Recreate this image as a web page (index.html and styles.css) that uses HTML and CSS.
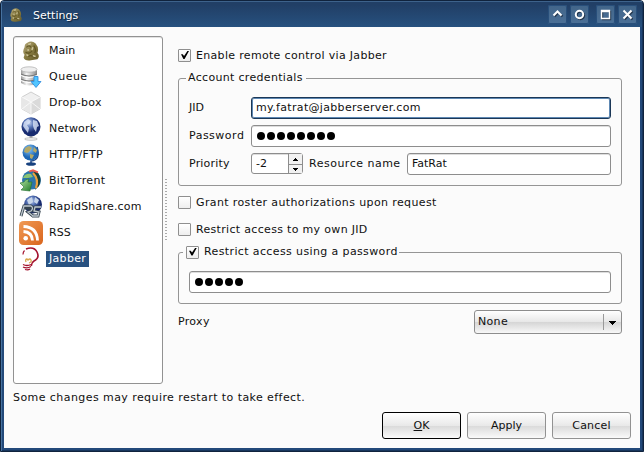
FILE: index.html
```html
<!DOCTYPE html>
<html lang="en">
<head>
<meta charset="utf-8">
<title>Settings</title>
<link rel="stylesheet" href="styles.css">
</head>
<body>
<svg class="defs" width="0" height="0">
  <defs>
    <linearGradient id="gold" x2="1" y2="1"><stop offset="0" stop-color="#b9ad80"/><stop offset=".5" stop-color="#85793f"/><stop offset="1" stop-color="#665b2a"/></linearGradient>
    <linearGradient id="steel"><stop offset="0" stop-color="#9c9c9c"/><stop offset=".35" stop-color="#f4f4f4"/><stop offset="1" stop-color="#888"/></linearGradient>
    <radialGradient id="blue" cx=".4" cy=".3"><stop offset="0" stop-color="#c4d3f2"/><stop offset=".5" stop-color="#5572b4"/><stop offset="1" stop-color="#182b70"/></radialGradient>
    <radialGradient id="sea" cx=".4" cy=".3"><stop offset="0" stop-color="#8fc8f5"/><stop offset="1" stop-color="#1c66b4"/></radialGradient>
    <linearGradient id="orange" x2="1" y2="1"><stop offset="0" stop-color="#f09a55"/><stop offset="1" stop-color="#d9651d"/></linearGradient>
    <linearGradient id="green" x2="1" y2="1"><stop offset="0" stop-color="#b4e4a0"/><stop offset="1" stop-color="#1f7a28"/></linearGradient>
    <symbol id="rat" viewBox="0 0 24 24">
      <path d="M8 3Q13 0 17 4Q21 9 19 14Q22 18 19 21L12 22Q5 23 4 19L5 16Q2 13 5 8Q5 4 8 3Z" fill="url(#gold)"/>
      <path d="M7 8q3-3 5 0M6 13q4 3 7-1M15 6q3 5 1 8M9 18q3-2 5 0l3 1" stroke="#574c1d" stroke-width="1.300" fill="none" opacity=".8"/>
      <path d="M9 5l3-1M7 16l2 1M14 17l3 1M13 11l1-3M8 11h2" stroke="#d1c8a0" stroke-width="1.600"/>
    </symbol>
  </defs>
</svg>
<div class="window">
  <header class="titlebar">
    <svg class="app-icon" width="16" height="16"><use href="#rat"/></svg>
    <h1 class="title">Settings</h1>
    <div class="wm"><svg width="19" height="19"><path class="sh" d="M6.500 11.500l4-4 4 4"/><path d="M5.500 10.500l4-4 4 4"/></svg></div>
    <div class="wm"><svg width="19" height="19"><circle class="sh" cx="10.500" cy="10.500" r="3.700"/><circle cx="9.500" cy="9.500" r="3.700"/></svg></div>
    <div class="wm gap"><svg width="19" height="19"><path class="sh thin" d="M6.500 6.500h8v8h-8z"/><path class="thin" d="M5.500 5.500h8v8h-8zM5 6.500h9"/></svg></div>
    <div class="wm"><svg width="19" height="19"><path class="sh" d="M6.500 6.500l8 8m0-8l-8 8"/><path d="M5.500 5.500l8 8m0-8l-8 8"/></svg></div>
  </header>
  <main class="content">
    <div class="panes">
      <ul class="pages">
        <li><svg viewBox="-1 -1 26 26"><use href="#rat" width="24" height="24"/></svg><span>Main</span></li>
        <li><svg viewBox="0 0 24 24"><path d="M2 5v13q8 5 16 0V5z" fill="url(#steel)"/><ellipse cx="10" cy="4.500" rx="8" ry="2.700" fill="#eee" stroke="#aaa" stroke-width=".7"/><path d="M2 9q8 4 16 0M2 14q8 4 16 0" stroke="#777" fill="none"/><path d="M2 10.500q8 4 16 0M2 15.500q8 4 16 0" stroke="#fff" fill="none"/><path d="M15 11.500h4v5h3l-5 6-5-6h3z" fill="#51c5ff" stroke="#2787dc" stroke-width=".8"/></svg><span class="s5">Queue</span></li>
        <li><svg viewBox="0 0 24 24"><path d="M12 1l9 5v12l-9 5-9-5V6z" fill="#f0f0f0" stroke="#c4c4c4" stroke-width=".8"/><path d="M3 6l9 5v12l-9-5z" fill="#e7e7e7"/><path d="M12 11l9-5v12l-9 5z" fill="#dadada"/><path d="M3 6l9 5 9-5M12 11v12M3 18l9-7 9 7" stroke="#fcfcfc" stroke-width=".8" fill="none"/></svg><span class="s3">Drop-box</span></li>
        <li><svg viewBox="0 0 24 24"><ellipse cx="12" cy="22" rx="6.500" ry="1.300" fill="#eee" stroke="#aaa" stroke-width=".6"/><path d="M12 18v3" stroke="#aaa" stroke-width="3"/><circle cx="12" cy="9.700" r="9.500" fill="url(#blue)"/><path d="M5 5l4-3 3 2-2 3-2 1 2 3-1 5-3-4-2-3zM14 3l4 1 2 5-2 1-1 5-2-3-1-3z" fill="#dbe5f8" opacity=".8"/></svg><span class="s2">Network</span></li>
        <li><svg viewBox="0 0 24 24"><path d="M18 4q4 13-6 14v3" stroke="#214885" stroke-width="1.500" fill="none"/><ellipse cx="12" cy="21" rx="5" ry="1.800" fill="#17417f"/><circle cx="11.500" cy="9.500" r="8" fill="url(#sea)"/><path d="M6 5l4-2 3 2-3 4-2 1-3-1zM11 11l4 1-2 4-2-1zM15 4l3 3-1 3-3-2z" fill="#b3a867"/></svg><span class="s3">HTTP/FTP</span></li>
        <li><svg viewBox="0 0 24 24"><circle cx="12.500" cy="11" r="9.500" fill="#2b75aa"/><path d="M17 2q7 6 3 15l-4 4Q21 10 14 4z" fill="#173e38"/><path d="M10 2.500l4-1.200 5 2" stroke="#ee594c" stroke-width="1.800" fill="none"/><path d="M14 4q6 6 3 15" stroke="#eca33e" stroke-width="2.200" fill="none"/><path d="M4 9q2-5 8-4l2 3-5 1z" fill="#8bc373"/><path d="M1 14l4-1q1-3 5-3l-1 3h4l-2 9-9-1 3-3z" fill="url(#green)" stroke="#226f2f" stroke-width=".6"/></svg><span class="s3">BitTorrent</span></li>
        <li><svg viewBox="0 0 24 24"><circle cx="14" cy="9.500" r="9" fill="url(#blue)"/><path d="M8 5l5-3 1 5-4 3zM16 2l4 3-2 4-3-2z" fill="#c7d5e9"/><path d="M2 21L5 11h7q3 2 0 5l-3 1 5 4M6 13l6 .5M22 12h-6l-1 4 5 1-1 4h-6" stroke="#34424e" stroke-width="3" fill="none"/><path d="M2 21L5 11h7q3 2 0 5l-3 1 5 4M22 12h-6l-1 4 5 1-1 4h-6" stroke="#bcc6ce" stroke-width="1.300" fill="none"/></svg><span class="s2">RapidShare.com</span></li>
        <li><svg viewBox="0 0 24 24"><rect width="24" height="24" rx="4.500" fill="url(#orange)"/><circle cx="6.700" cy="17.300" r="2.300" fill="#fff"/><path d="M4.500 10.500q8.500.5 9 9M4.500 5.500q13.500.5 14 14" stroke="#fff" stroke-width="2.800" fill="none"/></svg><span>RSS</span></li>
        <li class="selected"><svg viewBox="0 0 24 24"><path d="M7 2Q15-1 18 5Q21 11 15 14Q12 16 12.500 19" stroke="#a3122e" stroke-width="1.600" fill="none"/><path d="M5.500 3.500Q4 5 4 7.500" stroke="#a3122e" stroke-width="1.200" fill="none"/><path d="M7 15q-1-3 1-3l1 1q2-2 3 0t-2 3" stroke="#d8a74b" stroke-width="1.300" fill="none"/><path d="M4 17.500q4 2 8 0M4 20q4 2 8-.5M6 22.500q3 1 5-.5" stroke="#a3122e" stroke-width="1.300" fill="none"/></svg><span class="s3">Jabber</span></li>
      </ul>
      <div class="splitter"></div>
      <section class="page">
        <label class="check"><i class="box on"></i><span class="s3">Enable remote control via Jabber</span></label>
        <div class="group account">
          <div class="legend s3">Account credentials</div>
          <div class="row"><label class="name">JID</label><div class="field focus s3">my.fatrat@jabberserver.com</div></div>
          <div class="row"><label class="name s5">Password</label><div class="field dots"><i></i><i></i><i></i><i></i><i></i><i></i><i></i><i></i></div></div>
          <div class="row"><label class="name s2">Priority</label>
            <div class="spin"><span>-2</span><div class="steps"><b><svg width="5" height="3"><path d="M2 0h1v1h1v1h1v1H0V2h1V1h1z"/></svg></b><b><svg width="5" height="3"><path d="M0 0h5v1H4v1H3v1H2V2H1V1H0z"/></svg></b></div></div>
            <label class="resource s5">Resource name</label><div class="field">FatRat</div></div>
        </div>
        <label class="check grant"><i class="box"></i><span class="s4">Grant roster authorizations upon request</span></label>
        <label class="check own"><i class="box"></i><span class="s3">Restrict access to my own JID</span></label>
        <div class="group secret">
          <label class="legend check"><i class="box on"></i><span class="s4">Restrict access using a password</span></label>
          <div class="field dots"><i></i><i></i><i></i><i></i><i></i></div>
        </div>
        <div class="proxy"><label class="s3">Proxy</label><div class="select"><span class="s3">None</span><b><svg width="7" height="4"><path d="M0 0h7v1H6v1H5v1H4v1H3V3H2V2H1V1H0z"/></svg></b></div></div>
      </section>
    </div>
    <p class="note">Some changes may require restart to take effect.</p>
    <footer class="actions">
      <button class="default"><u>O</u>K</button><button>Apply</button><button class="s2">Cancel</button>
    </footer>
  </main>
</div>
</body>
</html>
```
FILE: styles.css
```css
* { box-sizing: border-box; }
body { margin: 0; background: #fff; font: 11px/14px "DejaVu Sans", sans-serif; color: #101010; }
.defs { display: block; height: 0; }
.s2 { letter-spacing: .2px; }
.s3 { letter-spacing: .32px; }
.s4 { letter-spacing: .38px; }
.s5 { letter-spacing: .5px; }
.window { width: 644px; height: 452px; padding: 0 3px 3px; border: 1px solid #10233d; border-radius: 4px 4px 0 0; background: #23497a; box-shadow: inset 1px 1px #47729f, inset -1px -1px #18365d; }
.titlebar { display: flex; align-items: center; height: 26px; margin: 0 -2px; padding: 0 5px 0 6px; background: linear-gradient(#213f66 3px, #27517f); border-top: 1px solid #3d628b; }
.app-icon { margin-right: 9px; }
.title { flex: 1; margin: 0; padding-top: 2px; font-size: 11px; font-weight: normal; color: #fff; text-shadow: 1px 1px 1px #0b1e35; }
.wm { width: 19px; height: 19px; margin-left: 3px; border-radius: 2px; background: linear-gradient(#426589, #4b7097); box-shadow: inset 0 0 0 1px #284f7b; }
.wm.gap { margin-left: 7px; }
.wm svg { display: block; fill: none; stroke: #fff; stroke-width: 2; }
.wm .thin { stroke-width: 1.4; }
.wm .sh { stroke: #24374d; }
.content { height: 421px; padding: 9px 9px 0; background: #fbfbfb; }
.panes { display: flex; height: 348px; }
.pages { width: 150px; margin: 0; padding: 1px 5px; list-style: none; background: #fff; border: 1px solid #929292; border-radius: 3px; box-shadow: inset 0 1px #e2e2e2; }
.pages li { display: flex; align-items: center; height: 26px; }
.pages svg { width: 24px; height: 24px; margin-right: 3px; }
.pages span { padding: 1px 3px 2px; line-height: 14px; }
.pages .selected span { padding: 1px 3px; color: #fff; background: #285180; }
.splitter { width: 2px; height: 62px; margin: 143px 11px 0 2px; background: repeating-linear-gradient(#aaa 0 1px, transparent 1px 3px); }
.page { width: 444px; padding-top: 13px; }
.check { display: flex; align-items: center; height: 13px; }
.box { position: relative; width: 13px; height: 13px; margin-right: 5px; border: 1px solid #8f8f8f; border-radius: 1px; background: linear-gradient(#fff, #eee); }
.box.on::before { content: ""; position: absolute; left: 2px; top: 1px; width: 8px; height: 8px; background: #000; clip-path: polygon(0 40%, 22% 40%, 38% 62%, 80% 0, 100% 0, 45% 100%, 30% 100%); }
.group { display: flex; flex-direction: column; border: 1px solid #959595; border-radius: 3px; padding: 0 10px; }
.legend { align-self: flex-start; height: 14px; margin-top: -8px; padding: 0 3px 0 2px; background: #fbfbfb; }
.account { height: 108px; margin-top: 16px; }
.account .legend { margin-left: -3px; margin-bottom: 12px; }
.row { display: flex; align-items: center; height: 22px; margin-bottom: 6px; }
.name { width: 62px; }
.field { flex: 1; height: 22px; padding: 3px 4px; border: 1px solid #8d8d8d; border-radius: 3px; background: #fff; box-shadow: inset 0 1px #ddd; }
.field.focus { border: 1px solid #1b3756; box-shadow: inset 0 0 0 1px #5e88b3; }
.dots { display: flex; align-items: center; padding: 0 5px; gap: 2px; }
.dots i { width: 8px; height: 8px; border-radius: 4px; background: #000; }
.spin { display: flex; width: 52px; height: 21px; margin-top: -1px; border: 1px solid #8d8d8d; border-radius: 3px; background: #fff; box-shadow: inset 0 1px #ddd; }
.spin span { flex: 1; padding: 3px 4px; }
.steps { width: 14px; display: grid; grid-template-rows: 10px 9px; border-left: 1px solid #8d8d8d; background: #f1f1f1; }
.steps b { display: flex; align-items: center; justify-content: center; }
.steps b + b { border-top: 1px solid #8d8d8d; }
.resource { width: 98px; margin-left: 6px; }
.grant { margin-top: 10px; }
.own { margin-top: 14px; }
.secret { height: 52px; margin-top: 16px; }
.secret .legend { margin-left: -6px; margin-bottom: 12px; padding: 0 1px 0 3px; }
.secret .field { flex: none; }
.proxy { display: flex; align-items: center; justify-content: space-between; height: 24px; margin-top: 6px; }
.select { display: flex; align-items: center; width: 148px; height: 24px; padding: 0 1px 0 3px; border: 1px solid #8d8d8d; border-radius: 3px; background: linear-gradient(#fff, #e8e8e8 48%, #d6d6d6 52%, #f8f8f8); }
.select span { flex: 1; padding-bottom: 1px; }
.select b { display: flex; align-items: center; justify-content: center; width: 17px; height: 16px; border-left: 1px solid #999; padding-top: 2px; }
.note { margin: 7px 0; letter-spacing: .43px; }
.actions { display: flex; justify-content: flex-end; gap: 6px; }
.actions button { width: 79px; height: 27px; padding: 1px 0 0; font: inherit; color: inherit; border: 1px solid #929292; border-radius: 3px; background: linear-gradient(#fff, #e9e9e9 50%, #dadada 52%, #fafafa); }
.actions .default { border-color: #000; }
```
